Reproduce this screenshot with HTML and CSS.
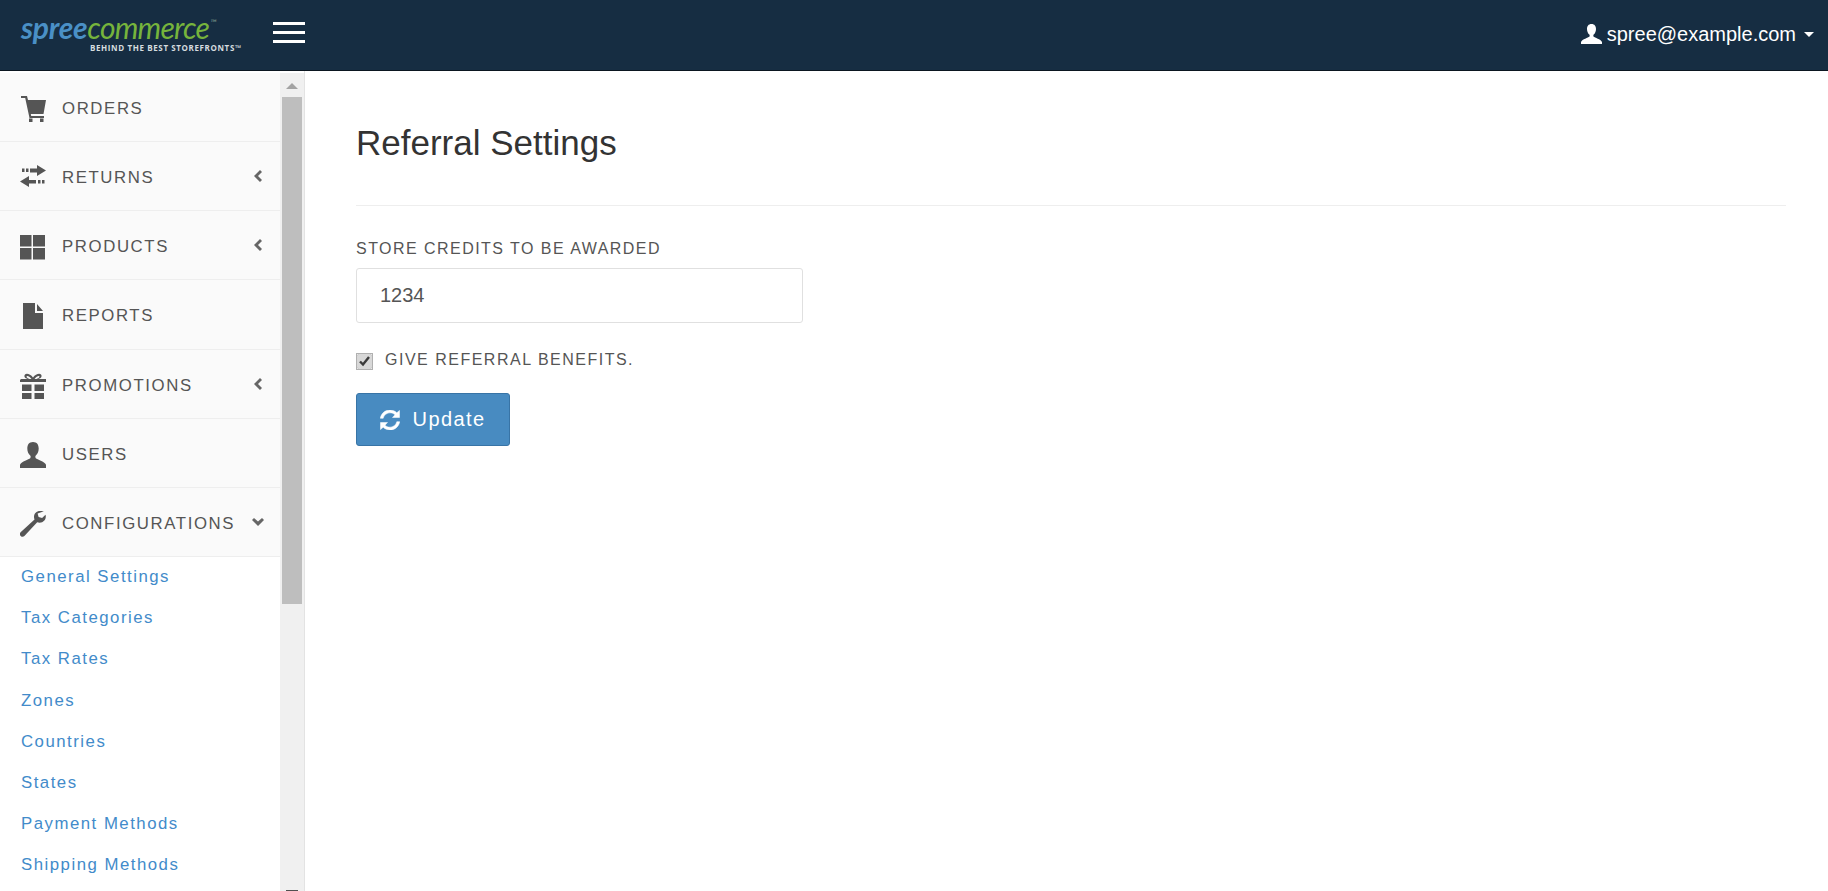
FILE: index.html
```html
<!DOCTYPE html>
<html lang="en">
<head>
<meta charset="utf-8">
<title>Referral Settings</title>
<link rel="stylesheet" href="styles.css">
</head>
<body>
<header class="topbar">
  <a class="logo" href="#">
    <span class="logo-main"><span class="logo-spree">spree</span><span class="logo-commerce">commerce</span><span class="logo-tm">™</span></span>
    <span class="logo-tag">BEHIND THE BEST STOREFRONTS™</span>
  </a>
  <button class="burger" type="button" aria-label="Toggle menu"><span></span><span></span><span></span></button>
  <a class="account" href="#">
    <svg class="account-icon" viewBox="0 0 21 20"><path d="M10.500 0C13.600 0 15 2.200 15 5c0 2.400-1 4.600-2.300 5.600-.5.4-.5 1.700 0 2.200 1 .9 7 2.400 8.300 5.200v2H0v-2c1.300-2.800 7.300-4.300 8.300-5.200.5-.5.5-1.800 0-2.200C7 9.600 6 7.400 6 5c0-2.800 1.400-5 4.500-5z"/></svg>
    <span>spree@example.com</span>
    <span class="caret"></span>
  </a>
</header>
<div class="layout">
  <aside class="sidebar">
    <nav class="menu">
      <a class="menu-item" href="#">
        <svg class="menu-icon" viewBox="0 0 26 26"><path d="M1 0h6l1 4h18l-2.500 14H10.800l.4 2H24v2H9.500L5.200 2H1z"/><path d="M9 22.500h3.500V26H9zM20 22.500h3.500V26H20z"/></svg>
        <span class="menu-label">ORDERS</span>
      </a>
      <a class="menu-item" href="#">
        <svg class="menu-icon" viewBox="0 0 26 26"><path d="M2 3.500h2.500v3.500H2zM6 3.500h2.500v3.500H6zM10 3.500h7V0l9 5.500-9 5.500V7.500h-7zM0 16.500 9 11v4h7v3.500H9V22zM18 15h2.500v3.500H18zM22 15h2.500v3.500H22z"/></svg>
        <span class="menu-label">RETURNS</span>
        <svg class="chev" viewBox="0 0 10 12"><path d="M7 0l2 2-4 4 4 4-2 2-6-6z"/></svg>
      </a>
      <a class="menu-item" href="#">
        <svg class="menu-icon" viewBox="0 0 26 26"><path d="M0 1h11.500v11.500H0zM13 1h12v11.500H13zM0 14h11.500v11.500H0zM13 14h12v11.500H13z"/></svg>
        <span class="menu-label">PRODUCTS</span>
        <svg class="chev" viewBox="0 0 10 12"><path d="M7 0l2 2-4 4 4 4-2 2-6-6z"/></svg>
      </a>
      <a class="menu-item" href="#">
        <svg class="menu-icon" viewBox="0 0 26 26"><path d="M3 0h12v10h8v16H3zM17 1l6 7h-6z"/></svg>
        <span class="menu-label">REPORTS</span>
      </a>
      <a class="menu-item" href="#">
        <svg class="menu-icon" viewBox="0 0 26 26"><path fill-rule="evenodd" d="M1 6h6.500C5 5 3.500 3.500 5 1.500 6.500 0 10.500 1 13 4.500 15.500 1 19.500 0 21 1.500c1.500 2 0 3.500-2.500 4.500H26v3H0V7zM7 3c-1 .5-.5 2 2.500 3h2C10 4 8 2.700 7 3zm12 0c-1-.3-3 1-4.500 3h2c3-1 3.500-2.500 2.500-3z"/><path d="M2 11.500h9.500V18H2zM14.500 11.500H24V18h-9.500zM2 20h9.500v6H2zM14.500 20H24v6h-9.500z"/></svg>
        <span class="menu-label">PROMOTIONS</span>
        <svg class="chev" viewBox="0 0 10 12"><path d="M7 0l2 2-4 4 4 4-2 2-6-6z"/></svg>
      </a>
      <a class="menu-item" href="#">
        <svg class="menu-icon" viewBox="0 0 26 26"><path d="M13 0c4 0 5.700 2.800 5.700 6.500 0 3-1.300 5.700-2.900 7-.6.500-.6 2.100 0 2.700 1.300 1.200 8.700 3 10.200 6.500V26H0v-3.300c1.500-3.500 8.900-5.300 10.200-6.500.6-.6.600-2.200 0-2.700-1.600-1.300-2.900-4-2.900-7C7.300 2.800 9 0 13 0z"/></svg>
        <span class="menu-label">USERS</span>
      </a>
      <a class="menu-item" href="#">
        <svg class="menu-icon" viewBox="0 0 26 26"><path d="M20 0c-3.500 0-6 2.500-6 6 0 1 .2 1.700.5 2.500L.6 21.300c-1 1.100-1 2.600.1 3.700s2.600 1.100 3.700.1L17.200 11.200c.8.300 1.600.5 2.500.5 3.500 0 6.100-2.600 6.100-6.100 0-.8-.1-1.400-.3-1.900l-3.400 3.400-3.500-1-1-3.500L24 .2C23 .1 21 0 20 0z"/></svg>
        <span class="menu-label">CONFIGURATIONS</span>
        <svg class="chev-down" viewBox="0 0 12 8"><path d="M0 2l2-2 4 3.500L10 0l2 2-6 6z"/></svg>
      </a>
      <ul class="submenu">
        <li><a href="#">General Settings</a></li>
        <li><a href="#">Tax Categories</a></li>
        <li><a href="#">Tax Rates</a></li>
        <li><a href="#">Zones</a></li>
        <li><a href="#">Countries</a></li>
        <li><a href="#">States</a></li>
        <li><a href="#">Payment Methods</a></li>
        <li><a href="#">Shipping Methods</a></li>
      </ul>
    </nav>
    <div class="scrollbar" aria-hidden="true">
      <span class="scroll-up"></span>
      <span class="scroll-thumb"></span>
      <span class="scroll-down"></span>
    </div>
  </aside>
  <main class="content">
    <h1 class="page-title">Referral Settings</h1>
    <hr class="rule">
    <form class="form">
      <label class="field-label" for="credits">STORE CREDITS TO BE AWARDED</label>
      <input class="field-input" id="credits" type="text" value="1234">
      <label class="check-row"><input class="check-box" type="checkbox" checked><span>GIVE REFERRAL BENEFITS.</span></label>
      <button class="btn" type="button">
        <svg class="btn-icon" viewBox="0 0 20 20"><path d="M10 0c2.700 0 5 1 6.800 2.800L19.500.4V7.500h-7l2.500-2.700C13.900 3.600 12 2.800 10 2.800c-3.300 0-6 2.300-6.800 5.500H.3C1.100 3.500 5.100 0 10 0zM.5 12.500h7L5 15.200c1.100 1.200 3 2 5 2 3.300 0 6-2.300 6.800-5.500h2.900C18.900 16.500 14.900 20 10 20c-2.700 0-5-1-6.800-2.800L.5 19.600z"/></svg>
        <span>Update</span>
      </button>
    </form>
  </main>
</div>
</body>
</html>
```
FILE: styles.css
```css
* { box-sizing: border-box; }
html, body { height: 100%; margin: 0; }
body {
  font-family: "Liberation Sans", Arial, sans-serif;
  color: #4d4d4d;
  background: #fff;
  overflow: hidden;
  display: flex;
  flex-direction: column;
}
a { text-decoration: none; color: inherit; }

.topbar {
  flex: none;
  height: 71px;
  background: #162d42;
  border-bottom: 1px solid #0b1620;
  display: flex;
  align-items: center;
  color: #fff;
}
.logo {
  width: 273px;
  padding: 0 0 10px 21px;
  display: flex;
  flex-direction: column;
  white-space: nowrap;
}
.logo-main {
  font-family: Lato, sans-serif;
  font-style: italic;
  font-size: 30px;
  line-height: 30px;
  letter-spacing: -0.6px;
}
.logo-spree { color: #4a90c6; font-weight: 700; letter-spacing: -0.3px; }
.logo-commerce { color: #76b43c; font-weight: 400; letter-spacing: -0.75px; }
.logo-tm { font-size: 9px; vertical-align: 13px; color: #7f9a8c; letter-spacing: 0; margin-left: 1px; }
.logo-tag {
  font-family: "Open Sans", sans-serif;
  font-size: 8px;
  line-height: 10px;
  font-weight: 700;
  letter-spacing: 0.62px;
  color: #d5dcdf;
  margin: 1px 0 0 69px;
}
.burger {
  width: 32px;
  margin-bottom: 5px;
  padding: 0;
  border: 0;
  background: none;
  display: flex;
  flex-direction: column;
  gap: 6px;
}
.burger span { display: block; height: 3px; background: #fff; }
.account {
  margin-left: auto;
  padding: 0 14px 2px 0;
  display: flex;
  align-items: center;
  font-size: 20px;
  color: #fff;
}
.account-icon { width: 21px; height: 20px; margin-right: 5px; fill: #fff; }
.caret {
  margin-left: 8px;
  width: 0;
  height: 0;
  border-left: 5px solid transparent;
  border-right: 5px solid transparent;
  border-top: 5px solid #fff;
}

.layout { flex: 1; min-height: 0; display: flex; }
.sidebar {
  flex: none;
  width: 305px;
  display: flex;
  border-right: 1px solid #e3e3e3;
  padding-top: 2px;
  overflow: hidden;
}
.menu { width: 280px; flex: none; }
.menu-item {
  height: 69.15px;
  display: flex;
  align-items: center;
  padding: 4px 12px 0 20px;
  background: #fafafa;
  border-bottom: 1px solid #eeeeee;
  font-size: 16.8px;
  letter-spacing: 1.6px;
  color: #555;
}
.menu-icon { width: 26px; height: 26px; margin-right: 16px; fill: #555; flex: none; }
.menu-label { flex: 1; }
.chev { width: 10px; height: 12px; fill: #666; margin: -4px 5px 0 0; }
.chev-down { width: 12px; height: 8px; fill: #666; margin: -4px 4px 0 0; }
.submenu { list-style: none; margin: 0; padding: 0; }
.submenu a {
  display: block;
  padding-left: 21px;
  height: 41.2px;
  line-height: 40px;
  font-size: 16.8px;
  letter-spacing: 1.5px;
  color: #428bca;
}
.scrollbar {
  flex: 1;
  background: #f0f0f0;
  display: flex;
  flex-direction: column;
  align-items: center;
}
.scroll-up {
  margin-top: 10px;
  width: 0;
  height: 0;
  border-left: 6px solid transparent;
  border-right: 6px solid transparent;
  border-bottom: 6px solid #a3a3a3;
}
.scroll-thumb { width: 20px; height: 507px; margin-top: 8px; background: #bebebe; }
.scroll-down { margin-top: auto; width: 12px; height: 1px; background: #505050; }

.content { flex: 1; min-width: 0; padding: 0 42px 0 51px; }
.page-title {
  margin: 48px 0 0;
  font-size: 35px;
  line-height: 48px;
  font-weight: 400;
  color: #333;
}
.rule { margin: 38px 0 0; border: 0; border-top: 1px solid #eeeeee; }
.form { display: flex; flex-direction: column; align-items: flex-start; }
.field-label {
  margin-top: 33px;
  font-size: 16px;
  line-height: 20px;
  letter-spacing: 1.46px;
  color: #555;
}
.field-input {
  width: 447px;
  height: 55px;
  margin-top: 9px;
  padding: 0 23px;
  border: 1px solid #e0e0e0;
  border-radius: 3px;
  font: 20px "Liberation Sans", Arial, sans-serif;
  color: #555;
}
.check-row {
  margin-top: 27px;
  display: flex;
  align-items: center;
  font-size: 16px;
  line-height: 20px;
  letter-spacing: 1.5px;
  color: #555;
}
.check-box {
  width: 15px;
  height: 15px;
  margin: 2px 13px 0 1px;
  accent-color: #d8d8d8;
  border-radius: 2px;
  box-shadow: 0 0 0 1px #b0b0b0;
}
.btn {
  margin-top: 23px;
  width: 154px;
  height: 53px;
  display: flex;
  align-items: center;
  justify-content: center;
  gap: 13px;
  background: #488bc1;
  border: 1px solid #3874a6;
  border-radius: 3px;
  font: 20px "Liberation Sans", Arial, sans-serif;
  letter-spacing: 1.4px;
  color: #fff;
}
.btn-icon { width: 20px; height: 20px; margin-left: -1px; fill: #fff; stroke: #fff; stroke-width: 0.5; }
```
